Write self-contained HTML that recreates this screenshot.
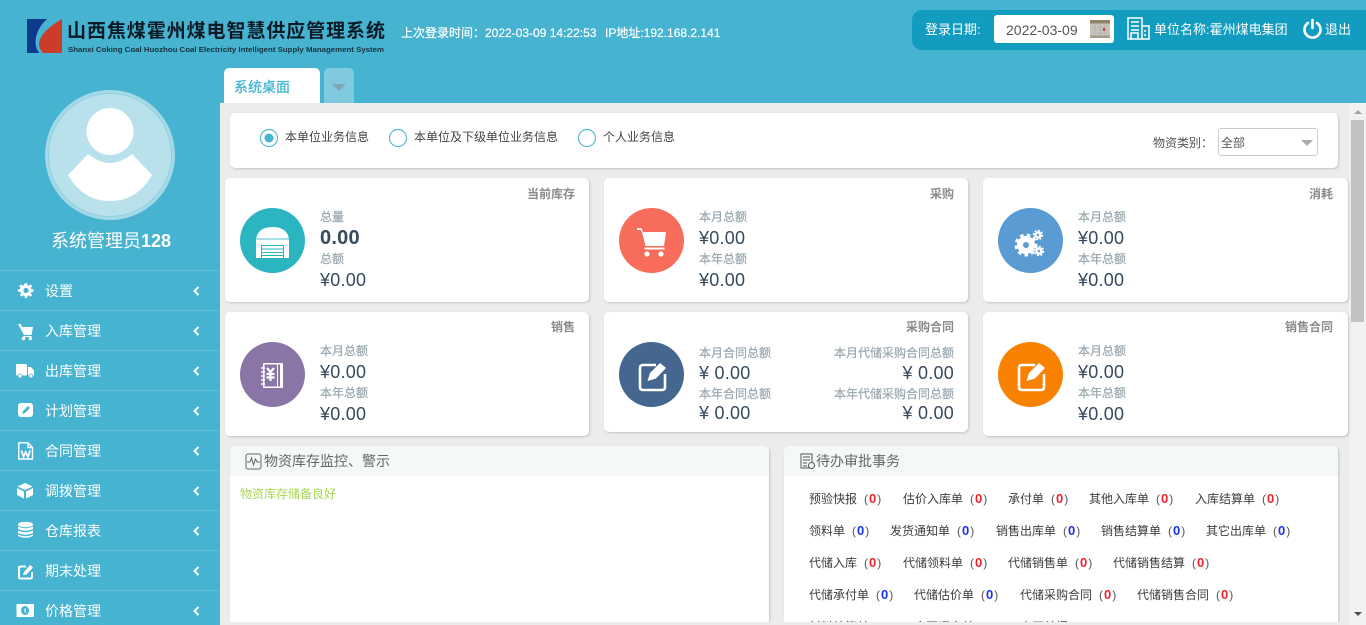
<!DOCTYPE html>
<html lang="zh"><head><meta charset="utf-8"><title>山西焦煤霍州煤电智慧供应管理系统</title>
<style>
html,body{margin:0;padding:0;width:1366px;height:625px;overflow:hidden}
body{position:relative;background:#46b3d0;font-family:"Liberation Sans","Noto Sans CJK SC",sans-serif;font-size:12px;color:#555}
.a,.t,.m,.ch{position:absolute}
.t{white-space:nowrap;line-height:20px;height:20px}
.card{position:absolute;background:#fff;border-radius:5px;box-shadow:1px 1px 2px #c4c4c4}
.ct{font-weight:bold;color:#8a8a8a;font-size:12px}
.l{color:#98a6ad;font-size:12px;-webkit-text-stroke:.2px #98a6ad}
.v{color:#36495e;font-size:18px;letter-spacing:.25px}
.c{position:absolute;width:65px;height:65px;border-radius:50%}
.c svg{position:absolute;left:0;top:0}
.m{left:0;width:220px;height:39px;border-top:1px solid #62bfd8;color:#fff;font-size:14px}
.m span{position:absolute;left:45px;top:10px;line-height:20px}
.m svg{position:absolute;left:0;top:-1px}
.m .ar{left:191px;top:13px}
.r{position:absolute;font-size:12px;color:#3c3c3c;white-space:nowrap;line-height:20px}
.r b{font-weight:bold;font-size:13px;line-height:1;color:#f0212e;margin:0 1px}.r b.u{color:#1c2fe8}
.r i{font-style:normal;color:#555}
.r i.o{margin-left:7px}
</style></head><body>

<!-- logo -->
<svg class="a" style="left:27px;top:19px" width="36" height="35" viewBox="0 0 36 35"><path d="M0 0H20Q9 10 8.500 23Q8.500 30 12.500 34H0Z" fill="#0e3a8e"/><path d="M35 0V34H16Q12 30 12 24Q14 12 35 0Z" fill="#cb3d28"/></svg>
<svg class="a" style="left:66px;top:18px" width="322" height="38"><text x="1" y="19" textLength="318" font-size="19" font-weight="bold" fill="#0b1a26" font-family="'Liberation Sans','Noto Sans CJK SC',sans-serif">山西焦煤霍州煤电智慧供应管理系统</text><text x="2" y="34" textLength="316" lengthAdjust="spacingAndGlyphs" font-size="7.5" font-weight="bold" fill="#14323f" font-family="'Liberation Sans',sans-serif">Shanxi Coking Coal Huozhou Coal Electricity Intelligent Supply Management System</text></svg>
<div class="t" style="left:401px;top:23px;color:#fff;-webkit-text-stroke:.2px #fff">上次登录时间：</div>
<div class="t" style="left:485px;top:23px;color:#fff;-webkit-text-stroke:.2px #fff">2022-03-09 14:22:53</div>
<div class="t" style="left:605px;top:23px;color:#fff;-webkit-text-stroke:.2px #fff">IP地址:192.168.2.141</div>

<!-- header pill -->
<div class="a" style="left:912px;top:10px;width:454px;height:40px;background:#129cbf;border-radius:10px 0 0 10px"></div>
<div class="t" style="left:925px;top:20px;color:#fff;font-size:13px">登录日期:</div>
<div class="a" style="left:994px;top:15px;width:120px;height:28px;background:#fff;border-radius:3px"></div>
<div class="t" style="left:1006px;top:20px;color:#555;font-size:14px">2022-03-09</div>
<svg class="a" style="left:1089px;top:19px" width="22" height="20"><rect x="1" y="1" width="20" height="18" rx="2" fill="#c9c5bd"/><rect x="1" y="1" width="20" height="3.500" fill="#8f8266"/><path d="M2 8H20M2 11H20M2 14H20M6 5V16M11 5V16M16 5V16" stroke="#aeaaa1" stroke-width=".6"/><rect x="1" y="16.500" width="20" height="2.500" fill="#a39c8c"/><rect x="14" y="9" width="2" height="3" fill="#c8404a"/></svg>
<svg class="a" style="left:1127px;top:17px" width="23" height="23" fill="none" stroke="#fff" stroke-width="1.5"><path d="M1 22V1H15V22ZM15 9H22V22H1M4 5H12M4 9H12M4 13H12M4 22V16H11V22M18 13V15M18 17V19"/></svg>
<div class="t" style="left:1154px;top:20px;color:#fff;font-size:13px">单位名称:霍州煤电集团</div>
<svg class="a" style="left:1302px;top:18px" width="21" height="21" fill="none" stroke="#fff" stroke-width="2.6" stroke-linecap="round"><path d="M6 5A8 8 0 1 0 15 5"/><path d="M10.500 2V10"/></svg>
<div class="t" style="left:1325px;top:20px;color:#fff;font-size:13px">退出</div>

<!-- tabs -->
<div class="a" style="left:224px;top:68px;width:96px;height:35px;background:#fff;border-radius:5px 5px 0 0"></div>
<div class="t" style="left:234px;top:77px;color:#46b3d0;font-size:14px;-webkit-text-stroke:.3px #46b3d0">系统桌面</div>
<div class="a" style="left:324px;top:68px;width:30px;height:35px;background:#7fcadf;border-radius:5px 5px 0 0"></div>
<div class="a" style="left:332px;top:84px;width:0;height:0;border-left:7px solid transparent;border-right:7px solid transparent;border-top:7px solid #7fa8b8"></div>

<!-- sidebar avatar -->
<svg class="a" style="left:45px;top:90px" width="130" height="130"><circle cx="65" cy="65" r="65" fill="#a6d9e7"/><circle cx="65" cy="65" r="61.500" fill="#b9e1ec" stroke="#8fd0e2" stroke-width="1"/><circle cx="65" cy="41.500" r="23.500" fill="#fff"/><path d="M23 85L43 64Q65 82 87 64L107 85Q92 111 65 111Q38 111 23 85Z" fill="#fff"/></svg>
<div class="t" style="left:51px;top:231px;color:#fff;font-size:18px">系统管理员<b>128</b></div>

<!-- menu -->
<div class="m" style="top:270px"><svg width="40" height="40" fill="#fff"><g transform="translate(26,20.500) scale(.74) translate(-11,-11.500)"><path fill-rule="evenodd" d="M9.500 1.500h3l.5 2.900 1.700.7 2.400-1.700 2.100 2.100-1.700 2.400.7 1.700 2.900.5v3l-2.900.5-.7 1.700 1.700 2.400-2.100 2.100-2.400-1.700-1.700.7-.5 2.900h-3l-.5-2.900-1.700-.7-2.400 1.700-2.100-2.100 1.700-2.400-.7-1.700L0 13v-3l2.900-.5.700-1.700-1.700-2.400 2.100-2.100 2.400 1.700 1.700-.7zM11 8a3.500 3.500 0 1 0 0 7 3.500 3.500 0 0 0 0-7z"/></g></svg><span>设置</span><svg class="ar" width="10" height="14" fill="none" stroke="#fff" stroke-width="2"><path d="M7.500 3L3.500 7l4 4"/></svg></div>
<div class="m" style="top:310px"><svg width="40" height="40" fill="#fff"><path d="M18 14H21L22 17H33L31.500 25H24Z"/><rect x="23.500" y="26" width="8" height="1"/><circle cx="23.500" cy="28.500" r="1.700"/><circle cx="30.500" cy="28.500" r="1.700"/></svg><span>入库管理</span><svg class="ar" width="10" height="14" fill="none" stroke="#fff" stroke-width="2"><path d="M7.500 3L3.500 7l4 4"/></svg></div>
<div class="m" style="top:350px"><svg width="40" height="40" fill="#fff"><rect x="16" y="14" width="11" height="11.500" rx="1"/><path d="M28 17H31L34 20.500V25.500H28Z"/><circle cx="20" cy="26" r="2" stroke="#46b3d0" stroke-width=".7"/><circle cx="31" cy="26" r="2" stroke="#46b3d0" stroke-width=".7"/></svg><span>出库管理</span><svg class="ar" width="10" height="14" fill="none" stroke="#fff" stroke-width="2"><path d="M7.500 3L3.500 7l4 4"/></svg></div>
<div class="m" style="top:390px"><svg width="40" height="40"><rect x="18" y="13" width="15" height="14" rx="3" fill="#fff"/><path d="M22 24l1-3 5-5 2 2-5 5z" fill="#46b3d0"/></svg><span>计划管理</span><svg class="ar" width="10" height="14" fill="none" stroke="#fff" stroke-width="2"><path d="M7.500 3L3.500 7l4 4"/></svg></div>
<div class="m" style="top:430px"><svg width="40" height="40" fill="none" stroke="#fff" stroke-width="1.400"><path d="M18.800 12.800H28L32.500 17.500V29H18.800ZM28 12.800V17.500H32.500"/><path d="M21.500 20.500L23.500 27 25.700 22 28 27 30 20.500" stroke-width="1.700"/></svg><span>合同管理</span><svg class="ar" width="10" height="14" fill="none" stroke="#fff" stroke-width="2"><path d="M7.500 3L3.500 7l4 4"/></svg></div>
<div class="m" style="top:470px"><svg width="40" height="40" fill="#fff"><path d="M25 13L17.500 16.500 25 20 32.500 16.500ZM17 18V25L24 28.500V21.500ZM26 21.500V28.500L33 25V18Z"/></svg><span>调拨管理</span><svg class="ar" width="10" height="14" fill="none" stroke="#fff" stroke-width="2"><path d="M7.500 3L3.500 7l4 4"/></svg></div>
<div class="m" style="top:510px"><svg width="40" height="40" fill="#fff"><ellipse cx="25.500" cy="14.500" rx="7.500" ry="2.800"/><path d="M18 16.500Q25.500 20 33 16.500V19Q25.500 22.500 18 19ZM18 20.500Q25.500 24 33 20.500V23Q25.500 26.500 18 23ZM18 24.500Q25.500 28 33 24.500V26Q25.500 29.500 18 26Z"/></svg><span>仓库报表</span><svg class="ar" width="10" height="14" fill="none" stroke="#fff" stroke-width="2"><path d="M7.500 3L3.500 7l4 4"/></svg></div>
<div class="m" style="top:550px"><svg width="40" height="40" fill="none" stroke="#fff" stroke-width="2"><path d="M32 22V27Q32 28.500 30.500 28.500H20.500Q19 28.500 19 27V18Q19 16.500 20.500 16.500H26"/><path d="M23 25l1-3 6-7 3 2.500-6.500 7z" fill="#fff" stroke="none"/></svg><span>期末处理</span><svg class="ar" width="10" height="14" fill="none" stroke="#fff" stroke-width="2"><path d="M7.500 3L3.500 7l4 4"/></svg></div>
<div class="m" style="top:590px"><svg width="40" height="40"><rect x="16.500" y="14" width="17.500" height="13" fill="#fff"/><ellipse cx="25" cy="20.500" rx="4" ry="4.500" fill="#46b3d0"/><rect x="24.500" y="18.500" width="1.200" height="4" fill="#fff"/></svg><span>价格管理</span><svg class="ar" width="10" height="14" fill="none" stroke="#fff" stroke-width="2"><path d="M7.500 3L3.500 7l4 4"/></svg></div>

<!-- content area -->
<div class="a" style="left:220px;top:103px;width:1146px;height:522px;background:#ececec"></div>
<div class="a" style="left:1349px;top:103px;width:17px;height:522px;background:#f1f1f1"></div>
<div class="a" style="left:1351px;top:120px;width:13px;height:202px;background:#c1c1c1"></div>
<div class="a" style="left:1354px;top:110px;width:0;height:0;border-left:4px solid transparent;border-right:4px solid transparent;border-bottom:4px solid #a3a3a3"></div>
<div class="a" style="left:1354px;top:612px;width:0;height:0;border-left:4px solid transparent;border-right:4px solid transparent;border-top:4px solid #505050"></div>

<!-- filter -->
<div class="card" style="left:230px;top:113px;width:1108px;height:55px"></div>
<svg class="a" style="left:258px;top:127px" width="340" height="22" fill="none" stroke="#57b9d6" stroke-width="1.200"><circle cx="11" cy="11" r="8.500"/><circle cx="11" cy="11" r="4.500" fill="#46b3d0" stroke="none"/><circle cx="140" cy="11" r="8.500"/><circle cx="329" cy="11" r="8.500"/></svg>
<div class="t" style="left:285px;top:127px;color:#444">本单位业务信息</div>
<div class="t" style="left:414px;top:127px;color:#444">本单位及下级单位业务信息</div>
<div class="t" style="left:603px;top:127px;color:#444">个人业务信息</div>
<div class="t" style="left:1153px;top:133px;color:#555">物资类别：</div>
<div class="a" style="left:1218px;top:128px;width:98px;height:26px;border:1px solid #ccc;border-radius:3px;background:#fff"></div>
<div class="t" style="left:1221px;top:133px;color:#555">全部</div>
<div class="a" style="left:1301px;top:140px;width:0;height:0;border-left:6px solid transparent;border-right:6px solid transparent;border-top:6px solid #aaa"></div>

<!-- row 1 -->
<div class="card" style="left:225px;top:178px;width:364px;height:124px"></div>
<div class="card" style="left:604px;top:178px;width:364px;height:124px"></div>
<div class="card" style="left:983px;top:178px;width:365px;height:124px"></div>
<!-- row 2 -->
<div class="card" style="left:225px;top:312px;width:364px;height:124px"></div>
<div class="card" style="left:604px;top:312px;width:364px;height:120px"></div>
<div class="card" style="left:983px;top:312px;width:365px;height:124px"></div>

<div class="c" style="left:240px;top:208px;background:#2bb5c0"><svg width="65" height="65"><path d="M16 50V31Q18 19 32.500 19Q47 19 49 31V50Z" fill="#fff"/><rect x="16" y="30" width="33" height="2" fill="#a5e0e4"/><rect x="21" y="37" width="23" height="13" fill="#2bb5c0"/><rect x="22" y="38" width="21" height="2.500" fill="#fff"/><rect x="22" y="41.500" width="21" height="2.500" fill="#fff"/><rect x="22" y="45" width="21" height="2" fill="#fff"/><rect x="22" y="48" width="21" height="2" fill="#fff"/></svg></div>
<div class="c" style="left:619px;top:208px;background:#f76c5a"><svg width="65" height="65" fill="#fff"><path d="M18 20H22.500L24 24H47L45 38H26.500L23 24 21.500 22H18Z"/><rect x="25.500" y="39.500" width="20" height="2"/><circle cx="28" cy="46" r="2.600"/><circle cx="42" cy="46" r="2.600"/></svg></div>
<div class="c" style="left:998px;top:208px;background:#5b9bd3"><svg width="65" height="65" fill="#fff"><circle cx="28" cy="37" r="6" fill="none" stroke="#fff" stroke-width="6"/><circle cx="28" cy="37" r="10" fill="none" stroke="#fff" stroke-width="3" stroke-dasharray="3.500 3.300"/><circle cx="40" cy="27" r="2.500" fill="none" stroke="#fff" stroke-width="2.500"/><circle cx="40" cy="27" r="4.500" fill="none" stroke="#fff" stroke-width="1.500" stroke-dasharray="2 1.500"/><circle cx="41" cy="43" r="2.500" fill="none" stroke="#fff" stroke-width="2.500"/><circle cx="41" cy="43" r="4.500" fill="none" stroke="#fff" stroke-width="1.500" stroke-dasharray="2 1.500"/></svg></div>
<div class="c" style="left:240px;top:342px;background:#8a75a6"><svg width="65" height="65"><rect x="23" y="21" width="20" height="25" rx="1" fill="#fff"/><rect x="24.500" y="22.500" width="12.500" height="22" fill="#8a75a6"/><rect x="38" y="22.500" width="2" height="22" fill="#8a75a6"/><path d="M27 26l3.500 4L34 26M30.500 30v9M26.500 32h8M26.500 35.500h8" stroke="#fff" stroke-width="2.200" fill="none"/><path d="M21 26h4M21 30h4M21 34h4M21 38h4M21 42h4" stroke="#fff" stroke-width="1.500"/></svg></div>
<div class="c" style="left:619px;top:342px;background:#45668e"><svg width="65" height="65" fill="none" stroke="#fff" stroke-width="2.600"><path d="M37 23H24Q21 23 21 26V45Q21 48 24 48H43Q46 48 46 45V32"/><path d="M28.500 39L31 31 41 21 47 26 37 36.500z" fill="#fff" stroke="none"/></svg></div>
<div class="c" style="left:998px;top:342px;background:#f98100"><svg width="65" height="65" fill="none" stroke="#fff" stroke-width="2.600"><path d="M37 23H24Q21 23 21 26V45Q21 48 24 48H43Q46 48 46 45V32"/><path d="M28.500 39L31 31 41 21 47 26 37 36.500z" fill="#fff" stroke="none"/></svg></div>

<!-- titles -->
<div class="t ct" style="right:791px;top:184px">当前库存</div>
<div class="t ct" style="right:412px;top:184px">采购</div>
<div class="t ct" style="right:33px;top:184px">消耗</div>
<div class="t ct" style="right:791px;top:317px">销售</div>
<div class="t ct" style="right:412px;top:317px">采购合同</div>
<div class="t ct" style="right:33px;top:317px">销售合同</div>

<!-- card1 -->
<div class="t l" style="left:320px;top:207px">总量</div>
<div class="t v" style="left:320px;top:228px;font-weight:bold;font-size:20px">0.00</div>
<div class="t l" style="left:320px;top:249px">总额</div>
<div class="t v" style="left:320px;top:270px">¥0.00</div>
<!-- card2 -->
<div class="t l" style="left:699px;top:207px">本月总额</div>
<div class="t v" style="left:699px;top:228px">¥0.00</div>
<div class="t l" style="left:699px;top:249px">本年总额</div>
<div class="t v" style="left:699px;top:270px">¥0.00</div>
<!-- card3 -->
<div class="t l" style="left:1078px;top:207px">本月总额</div>
<div class="t v" style="left:1078px;top:228px">¥0.00</div>
<div class="t l" style="left:1078px;top:249px">本年总额</div>
<div class="t v" style="left:1078px;top:270px">¥0.00</div>
<!-- card4 -->
<div class="t l" style="left:320px;top:341px">本月总额</div>
<div class="t v" style="left:320px;top:362px">¥0.00</div>
<div class="t l" style="left:320px;top:383px">本年总额</div>
<div class="t v" style="left:320px;top:404px">¥0.00</div>
<!-- card5 -->
<div class="t l" style="left:699px;top:343px">本月合同总额</div>
<div class="t v" style="left:699px;top:363px">¥ 0.00</div>
<div class="t l" style="left:699px;top:384px">本年合同总额</div>
<div class="t v" style="left:699px;top:403px">¥ 0.00</div>
<div class="t l" style="right:412px;top:343px">本月代储采购合同总额</div>
<div class="t v" style="right:412px;top:363px">¥ 0.00</div>
<div class="t l" style="right:412px;top:384px">本年代储采购合同总额</div>
<div class="t v" style="right:412px;top:403px">¥ 0.00</div>
<!-- card6 -->
<div class="t l" style="left:1078px;top:341px">本月总额</div>
<div class="t v" style="left:1078px;top:362px">¥0.00</div>
<div class="t l" style="left:1078px;top:383px">本年总额</div>
<div class="t v" style="left:1078px;top:404px">¥0.00</div>

<!-- bottom panels -->
<div class="a" style="left:220px;top:440px;width:1129px;height:182px;overflow:hidden">
  <div class="a" style="left:10px;top:6px;width:539px;height:190px;background:#fff;border-radius:5px 5px 0 0;box-shadow:1px 1px 2px #c4c4c4"></div>
  <div class="a" style="left:10px;top:6px;width:539px;height:30px;background:#f5f8f9;border-radius:5px 5px 0 0"></div>
  <div class="a" style="left:564px;top:6px;width:554px;height:190px;background:#fff;border-radius:5px 5px 0 0;box-shadow:1px 1px 2px #c4c4c4"></div>
  <div class="a" style="left:564px;top:6px;width:554px;height:30px;background:#f5f8f9;border-radius:5px 5px 0 0"></div>
  <svg class="a" style="left:25px;top:13px" width="17" height="17" fill="none" stroke="#666" stroke-width="1"><rect x="1" y="1" width="15" height="15" rx="2"/><path d="M2 9H5L6.500 5 8.500 12 10.500 6 12 9H15"/></svg>
  <div class="t" style="left:44px;top:11px;font-size:14px;color:#666">物资库存监控、警示</div>
  <div class="t" style="left:20px;top:44px;color:#a6d850">物资库存储备良好</div>
  <svg class="a" style="left:580px;top:13px" width="16" height="17" fill="none" stroke="#555" stroke-width="1"><path d="M10 15H1V1H12V9M3 4H10M3 7H10M3 10H7M3 13H7"/><circle cx="11.500" cy="12.500" r="3"/></svg>
  <div class="t" style="left:596px;top:11px;font-size:14px;color:#666">待办审批事务</div>

  <div class="r" style="left:589px;top:49px">预验快报<i class="o">(</i><b>0</b><i>)</i></div>
  <div class="r" style="left:683px;top:49px">估价入库单<i class="o">(</i><b>0</b><i>)</i></div>
  <div class="r" style="left:788px;top:49px">承付单<i class="o">(</i><b>0</b><i>)</i></div>
  <div class="r" style="left:869px;top:49px">其他入库单<i class="o">(</i><b>0</b><i>)</i></div>
  <div class="r" style="left:975px;top:49px">入库结算单<i class="o">(</i><b>0</b><i>)</i></div>

  <div class="r" style="left:589px;top:81px">领料单<i class="o">(</i><b class="u">0</b><i>)</i></div>
  <div class="r" style="left:670px;top:81px">发货通知单<i class="o">(</i><b class="u">0</b><i>)</i></div>
  <div class="r" style="left:776px;top:81px">销售出库单<i class="o">(</i><b class="u">0</b><i>)</i></div>
  <div class="r" style="left:881px;top:81px">销售结算单<i class="o">(</i><b class="u">0</b><i>)</i></div>
  <div class="r" style="left:986px;top:81px">其它出库单<i class="o">(</i><b class="u">0</b><i>)</i></div>

  <div class="r" style="left:589px;top:113px">代储入库<i class="o">(</i><b>0</b><i>)</i></div>
  <div class="r" style="left:683px;top:113px">代储领料单<i class="o">(</i><b>0</b><i>)</i></div>
  <div class="r" style="left:788px;top:113px">代储销售单<i class="o">(</i><b>0</b><i>)</i></div>
  <div class="r" style="left:893px;top:113px">代储销售结算<i class="o">(</i><b>0</b><i>)</i></div>

  <div class="r" style="left:589px;top:145px">代储承付单<i class="o">(</i><b class="u">0</b><i>)</i></div>
  <div class="r" style="left:694px;top:145px">代储估价单<i class="o">(</i><b class="u">0</b><i>)</i></div>
  <div class="r" style="left:800px;top:145px">代储采购合同<i class="o">(</i><b>0</b><i>)</i></div>
  <div class="r" style="left:917px;top:145px">代储销售合同<i class="o">(</i><b>0</b><i>)</i></div>

  <div class="r" style="left:589px;top:177px">材料结算单</div>
  <div class="r" style="left:694px;top:177px">合同评审单</div>
  <div class="r" style="left:800px;top:177px">内买单据</div>
</div>
</body></html>
